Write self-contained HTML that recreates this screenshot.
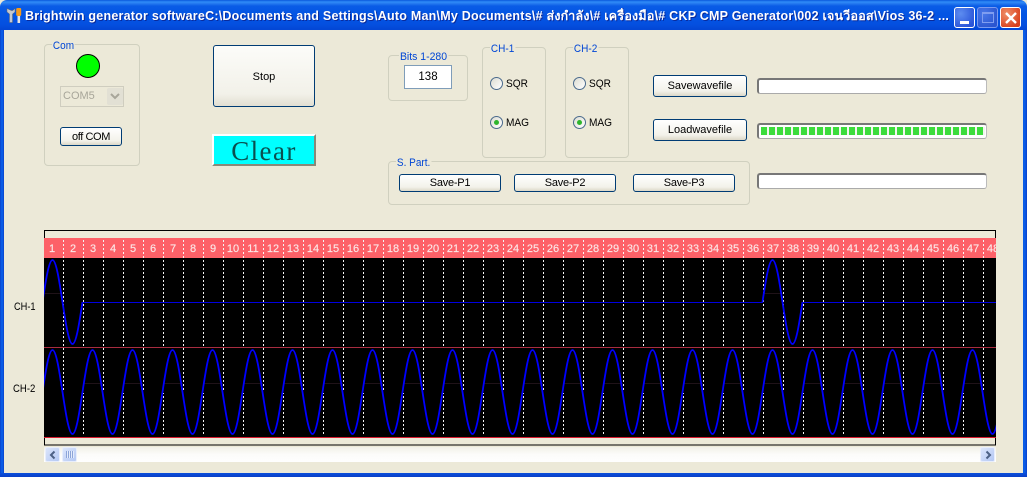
<!DOCTYPE html>
<html><head><meta charset="utf-8">
<style>
html,body{margin:0;padding:0;background:#ece9d8}
body{width:1027px;height:477px;position:relative;overflow:hidden;font:11px "Liberation Sans","Noto Sans CJK SC",sans-serif;color:#000}
.a{position:absolute;box-sizing:border-box}
.grp{position:absolute;box-sizing:border-box;border:1px solid #d0d0bf;border-radius:4px}
.lg{position:absolute;background:#ece9d8;color:#0046d5;padding:0 1px;font-size:11px;line-height:12px;white-space:nowrap;transform:scaleX(.91);transform-origin:left center}
.btn{position:absolute;box-sizing:border-box;border:1px solid #003c74;border-radius:3px;background:linear-gradient(#fff,#f3f2ea 75%,#dcd8c8);display:flex;align-items:center;justify-content:center;font-size:11px;color:#000;white-space:nowrap}
.pb{position:absolute;box-sizing:border-box;width:230px;height:16px;left:757px;background:#fff;border:1px solid #888;border-left:2px solid #777;border-top:2px solid #777;border-radius:3px;border-bottom-color:#aaa;border-right-color:#bbb}
.rd{position:absolute;box-sizing:border-box;width:13px;height:13px;border:1px solid #4a6a8c;border-radius:50%;background:linear-gradient(135deg,#dcdcd2,#fff)}
.rd.on:after{content:"";position:absolute;left:3px;top:3px;width:5px;height:5px;border-radius:50%;background:#2db52d}
.t{position:absolute;white-space:nowrap;font-size:11px;line-height:12px;transform:scaleX(.92);transform-origin:left center}
.wb{position:absolute;top:7px;width:21px;height:21px;box-sizing:border-box;border:1px solid #fff;border-radius:3px}
</style></head><body>

<!-- window frame -->
<div class="a" style="left:0;top:0;width:1027px;height:30px;border-radius:7px 7px 0 0;background:linear-gradient(#0a58dc 0,#2f8cf8 2px,#2a80f2 3px,#0a5ce6 6px,#0355e4 14px,#0450e0 24px,#0346d4 30px)"></div>
<div class="a" style="left:0;top:30px;width:4px;height:447px;background:linear-gradient(90deg,#0a3fc8,#0a5ce6,#0a5ce6,#0a3fc8)"></div>
<div class="a" style="left:1023px;top:30px;width:4px;height:447px;background:linear-gradient(90deg,#0a5ce6,#0a5ce6,#0a3fc8)"></div>
<div class="a" style="left:0;top:473px;width:1027px;height:4px;background:linear-gradient(#0a4fdc,#0a3fc8)"></div>

<!-- title icon -->
<svg class="a" style="left:6px;top:7px" width="17" height="17" viewBox="0 0 17 17">
<path d="M1 1.500v3.500l2.500 2v8.500h3V7l2.500-2V1.500L6.800 3.500H5.200z" fill="#c4c8d0" stroke="#666" stroke-width=".5"/>
<rect x="10.200" y="1" width="5" height="8" rx="1.200" fill="#f59a1c"/>
<rect x="11.500" y="9" width="2.600" height="7" fill="#e4e4e4"/>
</svg>
<div class="a" style="left:25px;top:8px;font:bold 12.500px/16px 'Liberation Sans','DejaVu Sans',sans-serif;color:#fff;white-space:nowrap;width:928px;overflow:hidden;text-shadow:1px 1px 0 #0a2a9a;letter-spacing:.23px">Brightwin generator softwareC:\Documents and Settings\Auto Man\My Documents\# ส่งกำลัง\# เครื่องมือ\# CKP CMP Generator\002 เจนวีออส\Vios 36-2 ...</div>

<!-- window buttons -->
<div class="wb" style="left:954px;background:radial-gradient(circle at 30% 30%,#5d8cf0,#2a55d8 80%)"><div class="a" style="left:5px;top:13px;width:9px;height:3px;background:#fff"></div></div>
<div class="wb" style="left:977px;border-color:#7a9af0;background:radial-gradient(circle at 30% 30%,#4a78e8,#2a55d0 80%)"><div class="a" style="left:4px;top:4px;width:12px;height:11px;border:1px solid #7f9df0;border-top-width:2px"></div></div>
<div class="wb" style="left:1000px;background:radial-gradient(circle at 30% 30%,#f0906a,#d8401c 80%)">
<svg class="a" style="left:3px;top:3px" width="14" height="14" viewBox="0 0 14 14"><path d="M2 2l10 10M12 2L2 12" stroke="#fff" stroke-width="2.400"/></svg></div>

<!-- Com group -->
<div class="grp" style="left:44px;top:44px;width:96px;height:122px"></div>
<div class="lg" style="left:52px;top:40px">Com</div>
<div class="a" style="left:76px;top:54px;width:24px;height:24px;border-radius:50%;background:#00ff00;border:1px solid #000"></div>
<div class="a" style="left:60px;top:86px;width:64px;height:21px;border:1px solid #cfcdbf;background:#ece9d8;color:#a8a69a;line-height:19px;padding-left:2px;font-size:11px">COM5</div>
<div class="a" style="left:107px;top:88px;width:16px;height:17px;background:#e2e0d4;border-radius:2px">
<svg class="a" style="left:3px;top:5px" width="10" height="7" viewBox="0 0 10 7"><path d="M1 1l4 4 4-4" fill="none" stroke="#a8a69a" stroke-width="2"/></svg></div>
<div class="btn" style="left:60px;top:127px;width:62px;height:19px;letter-spacing:-.4px">off COM</div>

<!-- Stop / Clear -->
<div class="btn" style="left:213px;top:45px;width:102px;height:62px;font-size:11px;padding-top:2px;background:linear-gradient(#fcfcf9,#f2f1e9 80%,#e2dfd2)">Stop</div>
<div class="a" style="left:212px;top:134px;width:104px;height:32px;background:#00ffff;border:2px solid;border-color:#fff #8a8878 #8a8878 #fff;text-align:center;font:27px/31px 'Liberation Serif',serif;letter-spacing:1.400px;color:#0a5050">Clear</div>

<!-- Bits -->
<div class="grp" style="left:388px;top:55px;width:80px;height:46px"></div>
<div class="lg" style="left:399px;top:51px;transform:scaleX(.95)">Bits 1-280</div>
<div class="a" style="left:404px;top:65px;width:48px;height:24px;border:1px solid #7f9db9;background:#fff;text-align:center;line-height:22px;font-size:11.500px">138</div>

<!-- CH-1 -->
<div class="grp" style="left:482px;top:47px;width:64px;height:111px"></div>
<div class="lg" style="left:490px;top:43px">CH-1</div>
<div class="rd" style="left:490px;top:77px"></div><div class="t" style="left:506px;top:78px">SQR</div>
<div class="rd on" style="left:490px;top:116px"></div><div class="t" style="left:506px;top:117px">MAG</div>

<!-- CH-2 -->
<div class="grp" style="left:565px;top:47px;width:64px;height:111px"></div>
<div class="lg" style="left:573px;top:43px">CH-2</div>
<div class="rd" style="left:573px;top:77px"></div><div class="t" style="left:589px;top:78px">SQR</div>
<div class="rd on" style="left:573px;top:116px"></div><div class="t" style="left:589px;top:117px">MAG</div>

<!-- S. Part -->
<div class="grp" style="left:388px;top:161px;width:362px;height:44px"></div>
<div class="lg" style="left:396px;top:157px">S. Part.</div>
<div class="btn" style="left:399px;top:174px;width:102px;height:18px;letter-spacing:-.25px">Save-P1</div>
<div class="btn" style="left:514px;top:174px;width:102px;height:18px;letter-spacing:-.25px">Save-P2</div>
<div class="btn" style="left:633px;top:174px;width:102px;height:18px;letter-spacing:-.25px">Save-P3</div>

<!-- file buttons -->
<div class="btn" style="left:653px;top:75px;width:94px;height:22px">Savewavefile</div>
<div class="btn" style="left:653px;top:119px;width:94px;height:22px">Loadwavefile</div>

<!-- progress bars -->
<div class="pb" style="top:78px"></div>
<div class="pb" style="top:123px"><div class="a" style="left:2px;top:2px;width:224px;height:8px;background:repeating-linear-gradient(90deg,#3cdc3c 0,#3cdc3c 6px,#f4f4f0 6px,#f4f4f0 8px)"></div></div>
<div class="pb" style="top:173px"></div>

<div class="t" style="left:14px;top:301px;transform:scaleX(.84)">CH-1</div>
<div class="t" style="left:13px;top:383px;transform:scaleX(.87)">CH-2</div>

<!-- chart -->
<svg class="a" style="left:0;top:0" width="1027" height="477" viewBox="0 0 1027 477">
<defs>
<pattern id="g1" x="63" y="0" width="20" height="4" patternUnits="userSpaceOnUse"><rect width="1" height="2" fill="#f4f4f4"/></pattern>
<pattern id="g2" x="63" y="0" width="40" height="4" patternUnits="userSpaceOnUse"><rect width="1" height="2" fill="#f4f4f4"/></pattern>
<pattern id="g3" x="83" y="0" width="40" height="4" patternUnits="userSpaceOnUse"><rect width="1" height="2" fill="#f4f4f4"/></pattern>
<pattern id="f1" x="83" y="0" width="40" height="1" patternUnits="userSpaceOnUse"><rect width="20" height="1" fill="#1f1219"/></pattern>
<path id="w" d="M0 392c3.260-21.500 6.380-42 10-42c3.620 0 6.740 20.500 10 42c3.260 21.500 6.380 42 10 42c3.620 0 6.740-20.500 10-42" fill="none" stroke="#0000ff" stroke-width="1.800"/>
<path id="c" d="M0 302c3.260-21.500 6.380-42 10-42c3.620 0 6.740 20.500 10 42c3.260 21.500 6.380 42 10 42c3.620 0 6.740-20.500 10-42" fill="none" stroke="#0000ff" stroke-width="1.800"/>
<clipPath id="cl"><rect x="44" y="230" width="952" height="210"/></clipPath>
</defs>
<rect x="44.500" y="230.500" width="951" height="214.500" fill="#ece9d8" stroke="#000"/>
<g clip-path="url(#cl)">
<rect x="45" y="238" width="951" height="20" fill="#fd6168"/>
<rect x="45" y="258" width="951" height="179" fill="#000"/>
<rect x="44" y="258" width="1" height="180" fill="#000"/>
<rect x="44" y="238" width="1" height="20" fill="#fd6168"/>
<rect x="63" y="238" width="930" height="109" fill="url(#g1)"/>
<rect x="63" y="348" width="930" height="42" fill="url(#g2)"/>
<rect x="63" y="393" width="930" height="42" fill="url(#g3)"/>
<rect x="44" y="293" width="19" height="1" fill="#1f1219"/>
<rect x="763" y="293" width="20" height="1" fill="#1f1219"/>
<rect x="83" y="383" width="912" height="1" fill="url(#f1)"/>
<rect x="44" y="347" width="952" height="1" fill="#a82c40"/>
<rect x="44" y="437" width="952" height="1" fill="#d81c30"/>
<path d="M83 302H763M803 302H996" stroke="#0000e0" stroke-width="1" fill="none" transform="translate(0,.5)"/>
<use href="#c" x="42.500"/><use href="#c" x="762.500"/>
<use href="#w" x="42.500"/><use href="#w" x="82.500"/><use href="#w" x="122.500"/><use href="#w" x="162.500"/><use href="#w" x="202.500"/><use href="#w" x="242.500"/><use href="#w" x="282.500"/><use href="#w" x="322.500"/><use href="#w" x="362.500"/><use href="#w" x="402.500"/><use href="#w" x="442.500"/><use href="#w" x="482.500"/><use href="#w" x="522.500"/><use href="#w" x="562.500"/><use href="#w" x="602.500"/><use href="#w" x="642.500"/><use href="#w" x="682.500"/><use href="#w" x="722.500"/><use href="#w" x="762.500"/><use href="#w" x="802.500"/><use href="#w" x="842.500"/><use href="#w" x="882.500"/><use href="#w" x="922.500"/><use href="#w" x="962.500"/>
<g font-family="Liberation Sans,sans-serif" font-size="11" fill="#fbe6e6" stroke="#fbe6e6" stroke-width=".15" text-anchor="middle">
<text x="52" y="252">1</text><text x="73" y="252">2</text><text x="93" y="252">3</text><text x="113" y="252">4</text><text x="133" y="252">5</text><text x="153" y="252">6</text><text x="173" y="252">7</text><text x="193" y="252">8</text><text x="213" y="252">9</text><text x="233" y="252">10</text><text x="253" y="252">11</text><text x="273" y="252">12</text><text x="293" y="252">13</text><text x="313" y="252">14</text><text x="333" y="252">15</text><text x="353" y="252">16</text><text x="373" y="252">17</text><text x="393" y="252">18</text><text x="413" y="252">19</text><text x="433" y="252">20</text><text x="453" y="252">21</text><text x="473" y="252">22</text><text x="493" y="252">23</text><text x="513" y="252">24</text><text x="533" y="252">25</text><text x="553" y="252">26</text><text x="573" y="252">27</text><text x="593" y="252">28</text><text x="613" y="252">29</text><text x="633" y="252">30</text><text x="653" y="252">31</text><text x="673" y="252">32</text><text x="693" y="252">33</text><text x="713" y="252">34</text><text x="733" y="252">35</text><text x="753" y="252">36</text><text x="773" y="252">37</text><text x="793" y="252">38</text><text x="813" y="252">39</text><text x="833" y="252">40</text><text x="853" y="252">41</text><text x="873" y="252">42</text><text x="893" y="252">43</text><text x="913" y="252">44</text><text x="933" y="252">45</text><text x="953" y="252">46</text><text x="973" y="252">47</text><text x="993" y="252">48</text>
</g>
</g>
</svg>

<!-- scrollbar -->
<div class="a" style="left:44px;top:447px;width:952px;height:15px;background:linear-gradient(#f1f0e8,#fcfcfa 50%,#fefefe)"></div>
<div class="a" style="left:45px;top:447px;width:15px;height:15px;background:linear-gradient(135deg,#dbe5fb,#b4c8f4);border:1px solid #e8eefc;border-radius:2px">
<svg class="a" style="left:2px;top:2px" width="10" height="10" viewBox="0 0 10 10"><path d="M6.500 1.500L3 5l3.500 3.500" fill="none" stroke="#4d6185" stroke-width="2"/></svg></div>
<div class="a" style="left:62px;top:447px;width:15px;height:15px;background:linear-gradient(135deg,#dbe5fb,#b4c8f4);border:1px solid #e8eefc;border-radius:2px">
<div class="a" style="left:3px;top:3px;width:8px;height:7px;background:repeating-linear-gradient(90deg,#8ca4d8 0,#8ca4d8 1px,#e4ecfc 1px,#e4ecfc 2px)"></div></div>
<div class="a" style="left:980px;top:447px;width:15px;height:15px;background:linear-gradient(135deg,#dbe5fb,#b4c8f4);border:1px solid #e8eefc;border-radius:2px">
<svg class="a" style="left:2px;top:2px" width="10" height="10" viewBox="0 0 10 10"><path d="M3.500 1.500L7 5 3.500 8.500" fill="none" stroke="#4d6185" stroke-width="2"/></svg></div>

</body></html>
